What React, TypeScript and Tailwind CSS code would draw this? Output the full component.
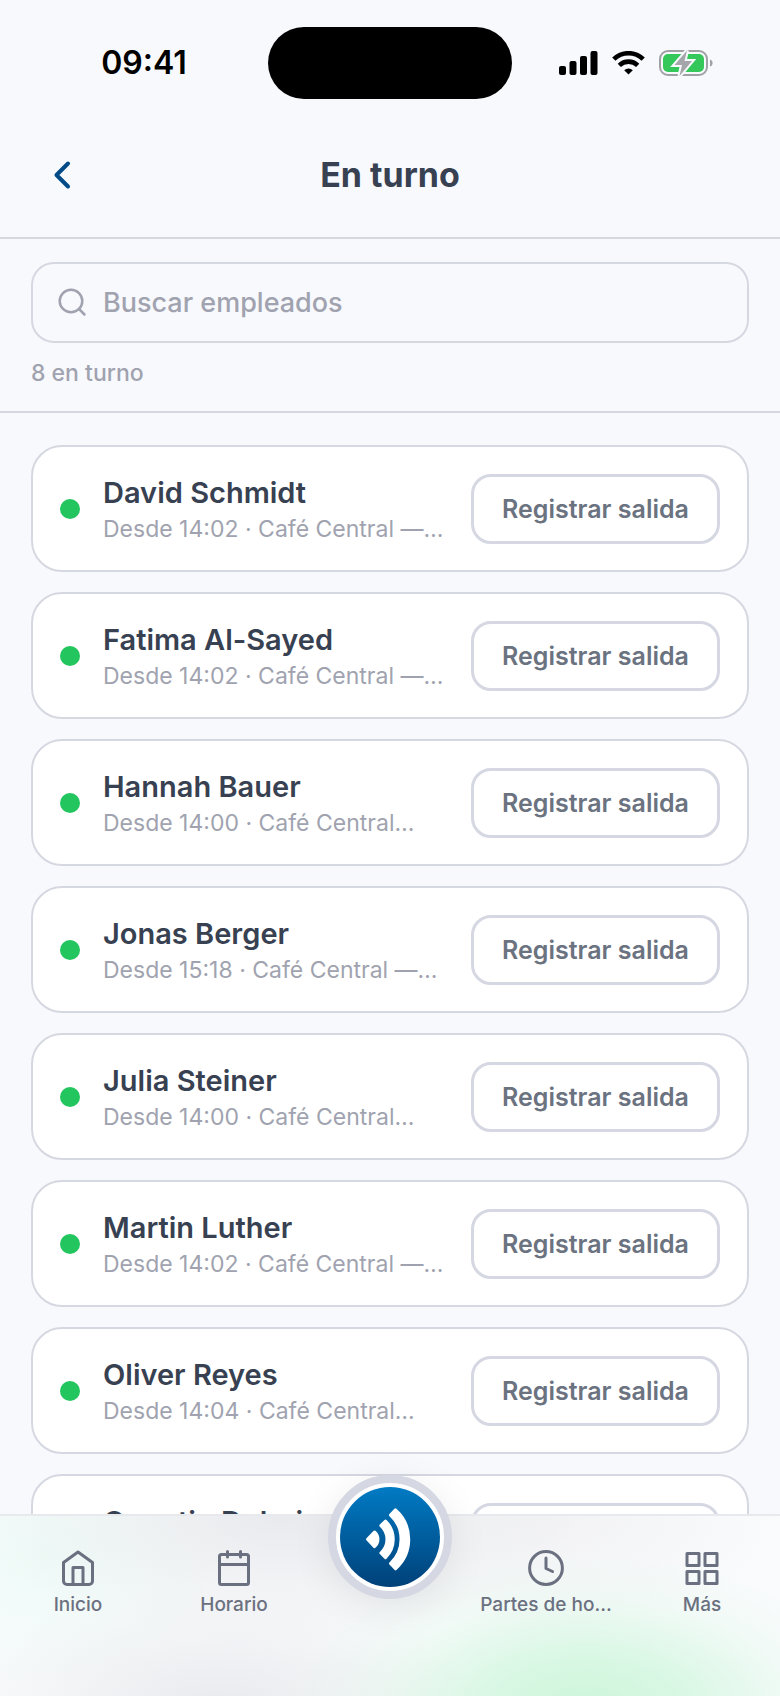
import React, { useState } from 'react';

interface Employee {
  name: string;
  since: string;
  place: string;
}

const EMPLOYEES: Employee[] = [
  { name: 'David Schmidt', since: '14:02', place: 'Café Central —…' },
  { name: 'Fatima Al-Sayed', since: '14:02', place: 'Café Central —…' },
  { name: 'Hannah Bauer', since: '14:00', place: 'Café Central…' },
  { name: 'Jonas Berger', since: '15:18', place: 'Café Central —…' },
  { name: 'Julia Steiner', since: '14:00', place: 'Café Central…' },
  { name: 'Martin Luther', since: '14:02', place: 'Café Central —…' },
  { name: 'Oliver Reyes', since: '14:04', place: 'Café Central…' },
  { name: 'Quentin Dubois', since: '14:02', place: 'Café Central…' },
];

const StatusBar: React.FC = () => (
  <div className="grid h-[125px] shrink-0 grid-cols-[1fr_244px_1fr] items-center text-black">
    <span className="pl-5 text-center text-[32px] leading-10 font-semibold">09:41</span>
    <div className="h-[72px] rounded-full bg-black" />
    <div className="flex items-center justify-center gap-[14px] pr-5">
      <svg width="39" height="24" viewBox="0 0 39 24" fill="currentColor" aria-hidden="true">
        <rect x="0" y="15" width="7" height="9" rx="2" />
        <rect x="10.5" y="10" width="7" height="14" rx="2" />
        <rect x="21" y="5" width="7" height="19" rx="2" />
        <rect x="31.5" y="0" width="7" height="24" rx="2" />
      </svg>
      <svg width="33" height="24" viewBox="0 0 33 24" fill="none" stroke="currentColor" strokeWidth="4.6" aria-hidden="true">
        <path d="M1.8 8.2a21 21 0 0 1 29.4 0" />
        <path d="M7.3 14.3a13.3 13.3 0 0 1 18.4 0" />
        <path d="M16.5 23.5l-4.3-4.3a6.2 6.2 0 0 1 8.6 0z" fill="currentColor" stroke="none" />
      </svg>
      <svg width="54" height="28" viewBox="0 0 54 28" aria-hidden="true">
        <rect x="1" y="2" width="47" height="24" rx="8" fill="none" stroke="#a0a1a5" strokeWidth="2" />
        <path d="M51 10.5c3.5 1 3.5 6 0 7z" fill="#a0a1a5" />
        <rect x="4" y="5" width="41" height="18" rx="5" fill="#34c759" />
        <path
          d="M28 1.500L15.500 16h7.500L20.500 27 33 12h-7.500z"
          fill="#a5a6aa"
          stroke="#f8f9fd"
          strokeWidth="4"
          paintOrder="stroke"
        />
      </svg>
    </div>
  </div>
);

const EmployeeCard: React.FC<{ employee: Employee }> = ({ employee }) => (
  <li className="flex h-[127px] shrink-0 items-center rounded-[31px] border-2 border-[#d6d8e1] bg-white px-[27px]">
    <span className="size-5 shrink-0 rounded-full bg-[#22c55e]" />
    <div className="ml-[23px] min-w-0 flex-1 pt-1">
      <h2 className="truncate text-[29px] leading-9 font-semibold text-[#374151]">{employee.name}</h2>
      <p className="truncate text-[23px] leading-9 text-[#a0a3af]">
        Desde {employee.since} · {employee.place}
      </p>
    </div>
    <button
      type="button"
      className="h-[70px] w-[249px] shrink-0 rounded-[20px] border-[3px] border-[#d5d8e2] text-[25px] leading-8 font-semibold text-[#6b7280]"
    >
      Registrar salida
    </button>
  </li>
);

const HomeIcon = () => (
  <svg width="40" height="40" viewBox="0 0 40 40" fill="none" stroke="currentColor" strokeWidth="3" strokeLinejoin="round" aria-hidden="true">
    <path d="M5.500 14.500L20 4l14.500 10.500V33a3.500 3.500 0 0 1-3.500 3.500H9A3.500 3.500 0 0 1 5.500 33z" />
    <path d="M15 36.500v-17h10v17" />
  </svg>
);

const CalendarIcon = () => (
  <svg width="40" height="40" viewBox="0 0 40 40" fill="none" stroke="currentColor" strokeWidth="3" strokeLinecap="round" strokeLinejoin="round" aria-hidden="true">
    <rect x="5.5" y="6.5" width="29" height="30" rx="2" />
    <path d="M5.500 16.500h29M13.500 3.500v5.500M26.500 3.500v5.500" />
  </svg>
);

const ClockIcon = () => (
  <svg width="40" height="40" viewBox="0 0 40 40" fill="none" stroke="currentColor" strokeWidth="3" strokeLinecap="round" strokeLinejoin="round" aria-hidden="true">
    <circle cx="20" cy="20" r="16.4" />
    <path d="M20 10v10.500l6.500 3" />
  </svg>
);

const GridIcon = () => (
  <svg width="40" height="40" viewBox="0 0 40 40" fill="none" stroke="currentColor" strokeWidth="3" strokeLinejoin="round" aria-hidden="true">
    <rect x="5" y="5.5" width="12" height="12" />
    <rect x="23" y="5.5" width="12" height="12" />
    <rect x="5" y="23.5" width="12" height="12" />
    <rect x="23" y="23.5" width="12" height="12" />
  </svg>
);

const NavItem: React.FC<{ label: string; icon: React.ReactNode }> = ({ label, icon }) => (
  <a href="#" className="flex min-w-0 flex-col items-center gap-[3px] px-2 text-[#6b7080]">
    {icon}
    <span className="text-[19px] leading-7 font-medium">{label}</span>
  </a>
);

const BottomNav: React.FC = () => (
  <nav className="relative z-10 h-[182px] shrink-0 border-t-2 border-[#e8e9ec] bg-[#fafbfd] bg-[radial-gradient(ellipse_300px_160px_at_75%_108%,#ccf6da,rgba(204,246,218,0.7)_35%,rgba(204,246,218,0.2)_70%,rgba(204,246,218,0)),radial-gradient(ellipse_260px_130px_at_28%_108%,#e9eaed,rgba(233,234,237,0.5)_50%,rgba(233,234,237,0)),radial-gradient(ellipse_300px_130px_at_36%_0%,#e9eaed,rgba(233,234,237,0.5)_50%,rgba(233,234,237,0)),radial-gradient(ellipse_240px_120px_at_70%_0%,#f2f2f4,rgba(242,242,244,0)),radial-gradient(ellipse_200px_150px_at_6%_20%,#eefbf7,rgba(238,251,247,0))]">
    <div className="grid grid-cols-5 pt-8">
      <NavItem label="Inicio" icon={<HomeIcon />} />
      <NavItem label="Horario" icon={<CalendarIcon />} />
      <span />
      <NavItem label="Partes de ho…" icon={<ClockIcon />} />
      <NavItem label="Más" icon={<GridIcon />} />
    </div>
    <button
      type="button"
      aria-label="Fichar"
      className="absolute -top-[41px] left-1/2 size-[124px] -translate-x-1/2 rounded-full border-8 border-[#d5d8e2] bg-white p-1 shadow-[0_8px_40px_rgba(0,0,0,0.08)]"
    >
      <span className="flex size-full items-center justify-center rounded-full bg-linear-to-b from-[#017bc4] to-[#004179]">
        <svg width="100" height="100" viewBox="0 0 100 100" fill="#fff" stroke="#fff" strokeWidth="3" strokeLinejoin="round" aria-hidden="true">
          <path d="M27.500 52.300L34.500 45a9.500 9.500 0 0 1 0 14.600z" />
          <path d="M45.500 34a25.500 25.500 0 0 1 0 36.600l-4.600-4.600a18.500 18.500 0 0 0 0-27.400z" />
          <path d="M55.500 22.800a39.500 39.500 0 0 1 0 59l-5-5.300a33 33 0 0 0 0-48.400z" />
        </svg>
      </span>
    </button>
  </nav>
);

const App: React.FC = () => {
  const [query, setQuery] = useState('');

  const visible = EMPLOYEES.filter(e => e.name.toLowerCase().includes(query.toLowerCase()));

  return (
    <div className="flex h-screen flex-col overflow-hidden bg-[#f8f9fd] font-['Inter',sans-serif]">
      <StatusBar />

      <header className="grid h-[114px] shrink-0 grid-cols-[1fr_auto_1fr] items-center border-b-2 border-[#d6d8e0] px-[31px] pb-3">
        <button type="button" aria-label="Volver" className="w-15 text-[#004b87]">
          <svg className="mx-auto" width="32" height="32" viewBox="0 0 32 32" fill="none" stroke="currentColor" strokeWidth="4" strokeLinecap="round" strokeLinejoin="round" aria-hidden="true">
            <path d="M23 4.500L11.500 16 23 27.500" />
          </svg>
        </button>
        <h1 className="text-[34px] leading-10 font-bold text-[#374151]">En turno</h1>
      </header>

      <section className="shrink-0 border-b-2 border-[#d6d8e0] px-[31px] pt-[23px] pb-5">
        <label className="flex h-[81px] items-center gap-[15px] rounded-[23px] border-2 border-[#d6d8e1] px-6">
          <svg className="shrink-0" width="31" height="31" viewBox="0 0 31 31" fill="none" stroke="#a0a3af" strokeWidth="2.5" strokeLinecap="round" aria-hidden="true">
            <circle cx="14" cy="14" r="11.3" />
            <path d="M22 22l5.500 5.500" />
          </svg>
          <input
            type="text"
            aria-label="Buscar empleados"
            placeholder="Buscar empleados"
            value={query}
            onChange={e => setQuery(e.target.value)}
            className="min-w-0 flex-1 bg-transparent text-[27px] leading-9 font-medium text-[#374151] outline-none placeholder:text-[#a0a3af]"
          />
        </label>
        <p className="mt-3 text-[23px] leading-9 font-medium text-[#a0a3af]">8 en turno</p>
      </section>

      <main className="min-h-0 flex-1 overflow-hidden px-[31px] pt-8">
        <ul className="flex flex-col gap-5">
          {visible.map(e => (
            <EmployeeCard key={e.name} employee={e} />
          ))}
        </ul>
      </main>

      <BottomNav />
    </div>
  );
};

export default App;
